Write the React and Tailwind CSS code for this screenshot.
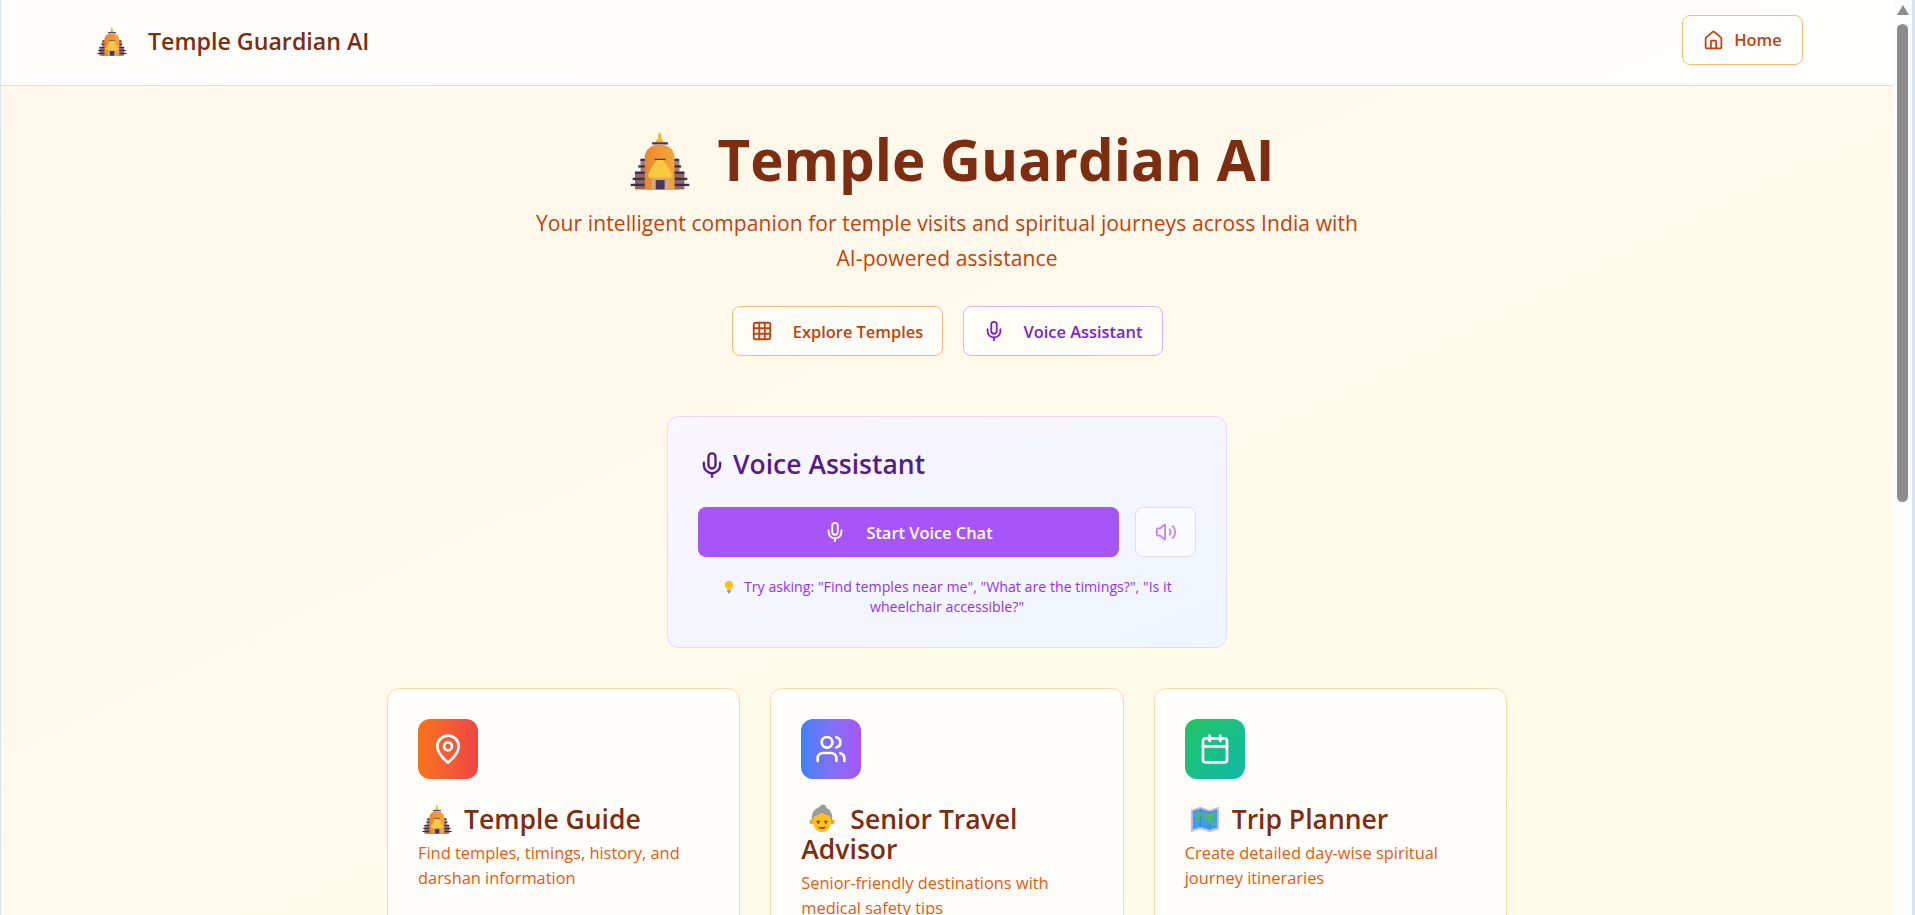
import React from "react";
import { House, Grid3x3, Mic, Volume2, MapPin, Users, Calendar } from "lucide-react";

function Temple({ className }) {
  return (
    <svg viewBox="30 25 182 182" className={className}>
      <defs>
        <linearGradient id="dome" x1="0" x2="1" y1="0" y2="0">
          <stop offset="0" stopColor="#e8862e" />
          <stop offset="0.6" stopColor="#f39a36" />
          <stop offset="1" stopColor="#f0a43a" />
        </linearGradient>
      </defs>
      <path d="M120 30c5 7 6 13 4 20l6 5c2 2 2 5 0 7h-20c-2-2-2-5 0-7l6-5c-2-7-1-13 4-20z" fill="#f5b82e" />
      <rect x="97" y="62" width="48" height="7" fill="#4a3560" />
      <rect x="62" y="113" width="118" height="92" fill="#a47c68" />
      <rect x="45" y="152" width="150" height="53" fill="#8e6a5c" />
      <rect x="62" y="112" width="116" height="7" fill="#3d2c56" />
      <rect x="55" y="132" width="130" height="7" fill="#3d2c56" />
      <rect x="45" y="151" width="150" height="7" fill="#3d2c56" />
      <rect x="38" y="170" width="166" height="7" fill="#3d2c56" />
      <rect x="32" y="188" width="178" height="7" fill="#3d2c56" />
      <path d="M75 205V108c0-24 20-39 45-39s45 15 45 39v97z" fill="url(#dome)" />
      <rect x="96" y="168" width="54" height="37" fill="#d9a777" />
      <path d="M113 112h16l6 12h-28zM104 124h34l7 16H97zM95 140h52l9 17H86zM86 157h70v13H86z" fill="#f6c93f" />
      <rect x="105" y="112" width="32" height="4" fill="#4a3560" />
      <rect x="108" y="177" width="27" height="28" fill="#4a3560" />
    </svg>
  );
}

function Grandma({ className }) {
  return (
    <svg viewBox="0 0 32 32" className={className}>
      <circle cx="17" cy="4.5" r="3.8" fill="#9c9c9c" />
      <circle cx="16" cy="14" r="11" fill="#9a9a9a" />
      <circle cx="5" cy="19" r="2.6" fill="#f2a42c" />
      <circle cx="27" cy="19" r="2.6" fill="#f2a42c" />
      <path d="M16 9c4 3 8 3 9 5 1 3 1 6 0 8-1 5-5 8-9 8s-8-3-9-8c-1-2-1-5 0-8 2-2 6-2 9-5z" fill="#fcc21b" />
      <path d="M10 18.5h4M18 18.5h4" stroke="#6b4a2e" strokeWidth="1.2" />
      <circle cx="12" cy="20" r="1" fill="#4a3320" />
      <circle cx="20" cy="20" r="1" fill="#4a3320" />
      <path d="M12.5 25c2 1.8 5 1.8 7 0-2 .3-5 .3-7 0z" fill="#a8323c" stroke="#a8323c" />
    </svg>
  );
}

function WorldMap({ className }) {
  return (
    <svg viewBox="0 0 32 28" className={className}>
      <path d="M1 4l10-3 10 3 10-3v24l-10 3-10-3-10 3z" fill="#c9bfe0" />
      <path d="M3 5.5l8-2.400 10 3 8-2.400V23l-8 2.400-10-3-8 2.400z" fill="#3f9ce8" />
      <path d="M11 3v19.500M21 6v19.500" stroke="#2a7fc8" strokeWidth="0.8" />
      <path d="M5 8l5-2 3 2-2 4-2 1 1 4-2 1-2-5zM14 8l3-1 2 2 4-1 4 1-1 4-3 1 1 5-3 1-2-5-3-1zM25 17l3-1v4l-3 1z" fill="#4fb873" />
    </svg>
  );
}

function Bulb({ className }) {
  return (
    <svg viewBox="0 0 16 20" className={className}>
      <path d="M8 1a6 6 0 0 0-3.500 10.900c.7.6 1 1.300 1 2.100h5c0-.8.3-1.500 1-2.100A6 6 0 0 0 8 1z" fill="#fcc21b" />
      <rect x="5.500" y="14" width="5" height="3.500" rx="0.800" fill="#9a9a9a" />
      <rect x="6.500" y="17.500" width="3" height="1.500" rx="0.700" fill="#6e6e6e" />
    </svg>
  );
}

function Card({ gradient, icon, emoji, title, desc }) {
  return (
    <div className="h-[300px] rounded-xl border border-[#fed7aa] bg-white/80 p-[30px]">
      <div className={`flex h-[60px] w-[60px] items-center justify-center rounded-xl text-white ${gradient}`}>{icon}</div>
      <h3 className="mt-[25px] text-[26.500px] leading-[30px] font-semibold text-[#7c2d12]">
        {emoji}
        {title}
      </h3>
      <p className="mt-[6px] text-[16.400px] leading-[25px] text-[#ea580c]">{desc}</p>
    </div>
  );
}

export default function App() {
  return (
    <div className="flex h-screen overflow-hidden bg-[#d6e6f0] font-['Open_Sans',sans-serif]">
      <div className="ml-px min-w-0 flex-1 overflow-hidden bg-linear-to-br from-[#fff7ed] to-[#fefce8]">
        <nav className="flex h-[86px] items-start justify-between border-b border-[#fed7aa] bg-white/90 pt-[15px] pr-[90px] pl-[96px]">
          <div className="flex h-[52px] items-center gap-[21px]">
            <Temple className="h-[30px] w-[30px]" />
            <span className="text-[23.200px] font-semibold text-[#7c2d12]">Temple Guardian AI</span>
          </div>
          <button className="flex h-[50px] w-[121px] items-center justify-center gap-[10px] rounded-lg border border-[#fdba74] bg-white/60 text-[16.400px] font-[550] text-[#c2410c]">
            <House className="h-[21px] w-[21px]" />
            <span className="mt-[1px]">Home</span>
          </button>
        </nav>

        <main className="flex flex-col items-center">
          <h1 className="mt-[38px] flex items-center gap-[27px] pl-[11px] text-[56.500px] leading-[72px] font-bold text-[#7c2d12]">
            <Temple className="h-[60px] w-[60px]" />
            Temple Guardian AI
          </h1>
          <p className="mt-[10px] w-[830px] text-center text-[21px] leading-[35px] tracking-[0.1px] text-[#c2410c]">
            Your intelligent companion for temple visits and spiritual journeys across India with AI-powered assistance
          </p>
          <div className="mt-[30px] flex gap-[20px]">
            <button className="flex h-[50px] w-[211px] items-center justify-center gap-[20px] rounded-lg border border-[#fdba74] bg-white/60 text-[16.400px] font-[550] text-[#c2410c]">
              <Grid3x3 className="h-[22px] w-[22px]" />
              <span className="mt-[2px]">Explore Temples</span>
            </button>
            <button className="flex h-[50px] w-[200px] items-center justify-center gap-[19px] rounded-lg border border-[#d8b4fe] bg-white/60 text-[16.400px] font-[550] text-[#7e22ce]">
              <Mic className="h-[22px] w-[22px]" />
              <span className="mt-[2px]">Voice Assistant</span>
            </button>
          </div>

          <section className="mt-[60px] h-[232px] w-[560px] rounded-xl border border-[#e9d5ff] bg-linear-to-br from-[#faf5ff] to-[#eff6ff] px-[30px] pt-[30px]">
            <h2 className="flex h-[36px] items-center gap-[7px] text-[26.500px] font-semibold text-[#581c87]">
              <Mic className="h-[28px] w-[28px]" />
              Voice Assistant
            </h2>
            <div className="mt-[24px] flex gap-[16px]">
              <button className="flex h-[50px] flex-1 items-center justify-center gap-[20px] rounded-lg bg-[#a855f7] text-[16.400px] font-[550] text-white">
                <Mic className="h-[22px] w-[22px]" />
                <span className="mt-[2px]">Start Voice Chat</span>
              </button>
              <button className="flex h-[50px] w-[61px] items-center justify-center rounded-lg border border-[#e9d5ff] bg-white/50 text-[#c084fc]">
                <Volume2 className="h-[22px] w-[22px]" />
              </button>
            </div>
            <p className="mt-[20px] text-center text-[14.200px] leading-[20px] text-[#9333ea]">
              <Bulb className="mr-[4px] inline-block h-[14px] w-[14px] align-[-2px]" />
              {' '}Try asking: "Find temples near me", "What are the timings?", "Is it wheelchair accessible?"
            </p>
          </section>

          <div className="mt-[40px] grid w-[1120px] grid-cols-3 gap-[30px]">
            <Card
              gradient="bg-linear-to-r from-[#f97316] to-[#ef4444]"
              icon={<MapPin className="h-8 w-8" />}
              emoji={<Temple className="mr-[12px] ml-[4px] inline-block h-[30px] w-[30px] align-[-5px]" />}
              title="Temple Guide"
              desc="Find temples, timings, history, and darshan information"
            />
            <Card
              gradient="bg-linear-to-r from-[#3b82f6] to-[#a855f7]"
              icon={<Users className="h-8 w-8" />}
              emoji={<Grandma className="mr-[13px] ml-[6px] inline-block h-[30px] w-[30px] align-[-5px]" />}
              title="Senior Travel Advisor"
              desc="Senior-friendly destinations with medical safety tips"
            />
            <Card
              gradient="bg-linear-to-br from-[#22c55e] to-[#14b8a6]"
              icon={<Calendar className="h-8 w-8" />}
              emoji={<WorldMap className="mr-[12px] ml-[5px] inline-block h-[28px] w-[30px] align-[-4px]" />}
              title="Trip Planner"
              desc="Create detailed day-wise spiritual journey itineraries"
            />
          </div>
        </main>
      </div>

      <div className="flex w-[19px] flex-col items-center bg-[#fbfcfc] pt-[5px]">
        <div className="h-0 w-0 border-x-[6px] border-b-[10px] border-x-transparent border-b-[#8c8c8c]" />
        <div className="mt-[9px] h-[478px] w-[11px] rounded-full bg-[#8c8c8c]" />
      </div>
      <div className="w-[3px]" />
    </div>
  );
}
